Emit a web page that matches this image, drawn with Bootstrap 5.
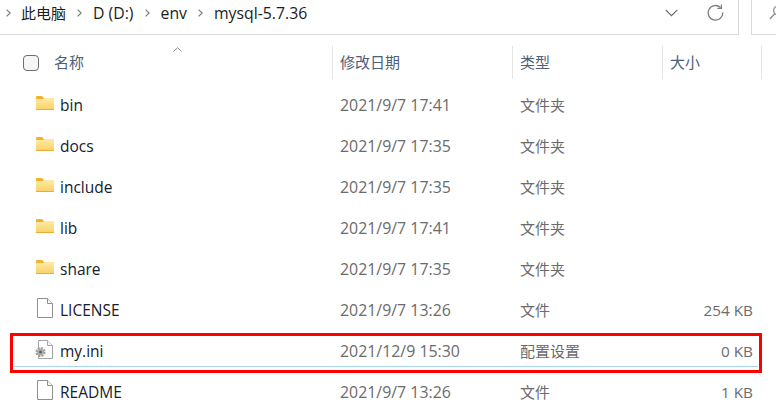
<!DOCTYPE html>
<html lang="zh-CN">
<head>
    <meta charset="UTF-8">
    <meta name="viewport" content="width=device-width, initial-scale=1.0">
    <title>mysql-5.7.36</title>
    <link href="https://cdn.jsdelivr.net/npm/bootstrap@5.3.0/dist/css/bootstrap.min.css" rel="stylesheet">
    <style>
        html, body {
            height: 408px;
            overflow: hidden;
        }
        body {
            background-color: #fff;
            font-family: "Open Sans", "Noto Sans CJK SC", sans-serif;
            font-size: 15px;
            color: #1a1a1a;
        }
        .top-strip {
            height: 35px;
            gap: 12px;
        }
        .addr-box {
            width: 739px;
            flex: none;
            gap: 11px;
            border-right: 1px solid #d9d9d9;
            border-bottom: 1px solid #d9d9d9;
            padding-left: 6px;
            padding-right: 14px;
            padding-bottom: 9px;
        }
        .crumb {
            font-size: 15.8px;
            line-height: 22px;
            color: #1c1c1c;
        }
        .crumb-cn {
            font-size: 15px;
        }
        .crumb-sep {
            flex: none;
        }
        .crumb-sep.first {
            margin-right: -1px;
        }
        .refresh-ico {
            margin-left: 18px;
        }
        .search-box {
            flex: 1;
            border-left: 1px solid #d9d9d9;
            border-bottom: 1px solid #d9d9d9;
            padding-left: 17px;
            padding-bottom: 9px;
        }
        .search-box svg {
            flex: none;
        }
        .sort-caret {
            position: absolute;
            left: 173px;
            top: 1px;
        }
        .head-row {
            position: relative;
            height: 33px;
            margin-top: 11px;
            color: #4c607a;
            font-size: 15px;
        }
        .col-check {
            width: 54px;
            flex: none;
            padding-left: 23px;
        }
        .fake-check {
            width: 16px;
            height: 16px;
            border: 1px solid #6d6d6d;
            border-radius: 4px;
            background: #f6f6f6;
        }
        .col-name {
            width: 278px;
            flex: none;
        }
        .col-date {
            width: 180px;
            flex: none;
            padding-left: 7px;
        }
        .col-kind {
            width: 150px;
            flex: none;
            padding-left: 7px;
        }
        .col-size {
            width: 100px;
            flex: none;
            padding-left: 7px;
        }
        .head-row .col-date,
        .head-row .col-kind,
        .head-row .col-size {
            height: 33px;
            line-height: 33px;
            border-left: 1px solid #e5e5e5;
        }
        .head-row .col-size {
            border-right: 1px solid #e5e5e5;
        }
        .file-list {
            margin-top: 6px;
        }
        .file-row {
            height: 41px;
            position: relative;
        }
        .file-row .ico-cell {
            width: 60px;
            flex: none;
            padding-left: 36px;
            padding-bottom: 5px;
        }
        .file-row .col-name {
            width: 272px;
            font-size: 15.5px;
            color: #14202e;
        }
        .file-row .col-date,
        .file-row .col-kind,
        .file-row .col-size {
            color: #6b6b6b;
            padding-left: 8px;
        }
        .file-row .col-date {
            font-size: 15.9px;
        }
        .file-row .col-size {
            width: 91px;
            padding-left: 0;
            font-size: 15.3px;
            text-align: right;
        }
        .page-ico {
            margin-left: 1px;
        }
        .gear-ico {
            margin-left: -1px;
        }
        .file-row.picked::after {
            content: "";
            position: absolute;
            left: 14px;
            right: 18px;
            top: 35px;
            border-bottom: 1px solid #a8d3ef;
        }
        .red-frame {
            position: absolute;
            left: 10px;
            top: 333px;
            width: 752px;
            height: 40px;
            border: 3px solid #ff0000;
        }
    </style>
</head>
<body>
    <div class="top-strip d-flex">
        <div class="addr-box d-flex align-items-center">
            <svg class="crumb-sep first" width="5" height="8" viewBox="0 0 5 8"><path d="M.6.6 4.2 4 .6 7.4" fill="none" stroke="#7a7a7a" stroke-width="1.2"/></svg>
            <span class="crumb crumb-cn">此电脑</span>
            <svg class="crumb-sep" width="5" height="8" viewBox="0 0 5 8"><path d="M.6.6 4.2 4 .6 7.4" fill="none" stroke="#7a7a7a" stroke-width="1.2"/></svg>
            <span class="crumb">D (D:)</span>
            <svg class="crumb-sep" width="5" height="8" viewBox="0 0 5 8"><path d="M.6.6 4.2 4 .6 7.4" fill="none" stroke="#7a7a7a" stroke-width="1.2"/></svg>
            <span class="crumb">env</span>
            <svg class="crumb-sep" width="5" height="8" viewBox="0 0 5 8"><path d="M.6.6 4.2 4 .6 7.4" fill="none" stroke="#7a7a7a" stroke-width="1.2"/></svg>
            <span class="crumb">mysql-5.7.36</span>
            <svg class="ms-auto" width="13" height="8" viewBox="0 0 13 8"><path d="M.7.9 6.5 6.7 12.3.9" fill="none" stroke="#6a6a6a" stroke-width="1.2"/></svg>
            <svg class="refresh-ico" width="17" height="17" viewBox="0 0 17 17"><path d="M13.6 3.6A7.3 7.3 0 1 0 15.8 8.6" fill="none" stroke="#7c7c7c" stroke-width="1.3"/><path d="M14.4 .4V4.4H10.4" fill="none" stroke="#7c7c7c" stroke-width="1.3"/></svg>
        </div>
        <div class="search-box d-flex align-items-center">
            <svg width="14" height="15" viewBox="0 0 14 15"><circle cx="9" cy="5.5" r="4.4" fill="none" stroke="#8a8a8a" stroke-width="1.2"/><path d="M5.8 8.8 .8 14" stroke="#8a8a8a" stroke-width="1.3"/></svg>
        </div>
    </div>

    <div class="head-row d-flex align-items-center">
        <svg class="sort-caret" width="9" height="5" viewBox="0 0 9 5"><path d="M.4 4.6 4.5.7 8.6 4.6" fill="none" stroke="#8c8c8c"/></svg>
        <div class="col-check"><div class="fake-check"></div></div>
        <div class="col-name">名称</div>
        <div class="col-date">修改日期</div>
        <div class="col-kind">类型</div>
        <div class="col-size">大小</div>
    </div>

    <div class="file-list" id="fileList"></div>
    <div class="red-frame"></div>

    <svg width="0" height="0" class="d-block">
        <defs>
            <linearGradient id="folderFill" x1="0" y1="0" x2="0" y2="1">
                <stop offset="0" stop-color="#fdeaa8"/>
                <stop offset="1" stop-color="#fcd062"/>
            </linearGradient>
        </defs>
    </svg>

    <script>
        const files = [
            ['bin', '2021/9/7 17:41', '文件夹', '', 'folder'],
            ['docs', '2021/9/7 17:35', '文件夹', '', 'folder'],
            ['include', '2021/9/7 17:35', '文件夹', '', 'folder'],
            ['lib', '2021/9/7 17:41', '文件夹', '', 'folder'],
            ['share', '2021/9/7 17:35', '文件夹', '', 'folder'],
            ['LICENSE', '2021/9/7 13:26', '文件', '254 KB', 'file'],
            ['my.ini', '2021/12/9 15:30', '配置设置', '0 KB', 'ini'],
            ['README', '2021/9/7 13:26', '文件', '1 KB', 'file']
        ];

        const icons = {
            folder: '<svg width="18" height="14" viewBox="0 0 18 14"><path d="M0 1a1 1 0 0 1 1-1h5l2 2h10v2H0z" fill="#f0b429"/><path d="M0 3h7l1-1h10v12H0z" fill="url(#folderFill)"/><path d="M0 13h18v1H0z" fill="#e9ad3a"/></svg>',
            file: '<svg class="page-ico" width="16" height="20" viewBox="0 0 16 20"><path d="M.5.5H10.5L15.5 5.5V19.5H.5Z" fill="#fff" stroke="#8f8f8f"/><path d="M10.5.5V5.5H15.5" fill="#f4f4f4" stroke="#8f8f8f"/></svg>',
            ini: '<svg class="gear-ico" width="18" height="19" viewBox="0 0 18 19"><path d="M3.5.5H12.5L17.5 5.5V18.5H3.5Z" fill="#fff" stroke="#a5a5a5"/><path d="M12.5.5V5.5H17.5" fill="#f4f4f4" stroke="#a5a5a5"/><circle cx="5.5" cy="12" r="3.6" fill="#bdbdbd" stroke="#a0a0a0" stroke-width="3" stroke-dasharray="1.8 1"/><circle cx="5.5" cy="12" r="1.5" fill="#5a5a5a"/></svg>'
        };

        const list = document.getElementById('fileList');
        files.forEach(function (f) {
            const row = document.createElement('div');
            row.className = 'file-row d-flex align-items-center' + (f[0] === 'my.ini' ? ' picked' : '');
            row.innerHTML =
                '<div class="ico-cell d-flex align-items-center">' + icons[f[4]] + '</div>' +
                '<div class="col-name">' + f[0] + '</div>' +
                '<div class="col-date">' + f[1] + '</div>' +
                '<div class="col-kind">' + f[2] + '</div>' +
                '<div class="col-size">' + f[3] + '</div>';
            list.appendChild(row);
        });
    </script>
    <script src="https://cdn.jsdelivr.net/npm/bootstrap@5.3.0/dist/js/bootstrap.bundle.min.js"></script>
</body>
</html>
